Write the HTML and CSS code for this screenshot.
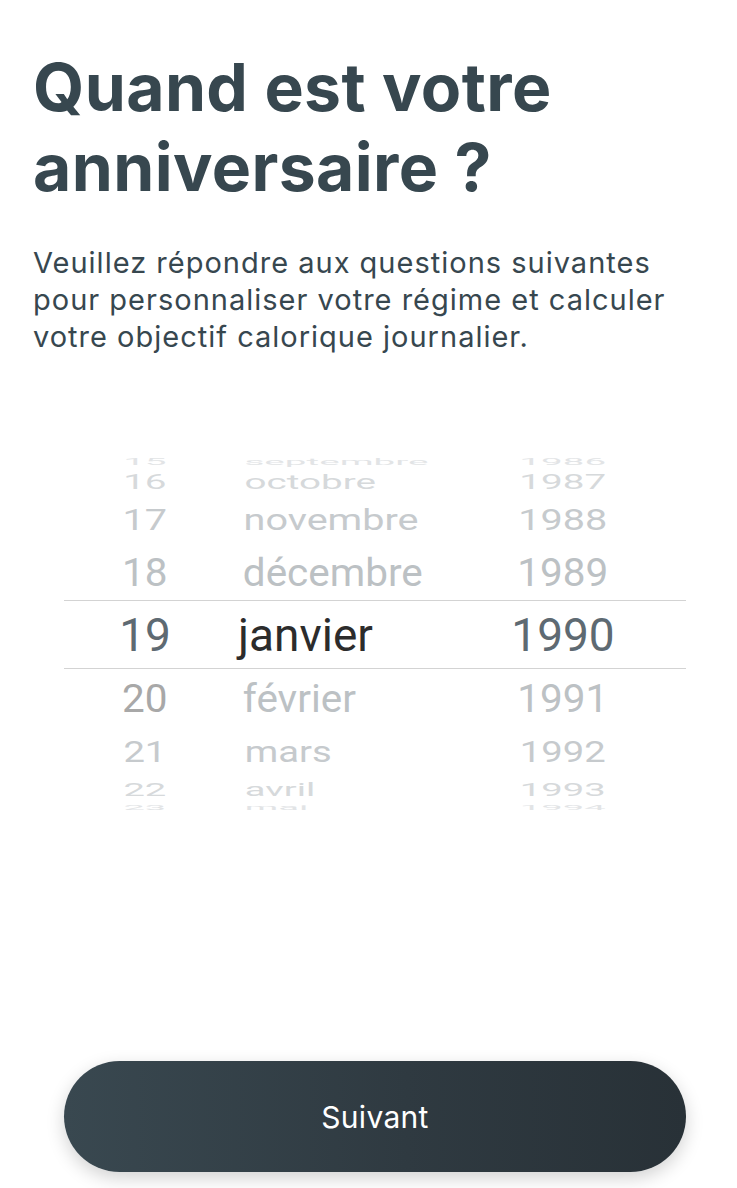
FILE: index.html
```html
<!DOCTYPE html>
<html lang="fr">
<head>
<meta charset="utf-8">
<title>Quand est votre anniversaire ?</title>
<link rel="stylesheet" href="styles.css">
</head>
<body>
<main class="screen">
  <header class="intro">
    <h1 class="title">Quand est votre anniversaire ?</h1>
    <p class="lead">Veuillez répondre aux questions suivantes pour personnaliser votre régime et calculer votre objectif calorique journalier.</p>
  </header>

  <section class="picker" aria-label="Date de naissance">
    <div class="row p-4"><span class="cell day"><span>15</span></span><span class="cell month"><span>septembre</span></span><span class="cell year"><span>1986</span></span></div>
    <div class="row p-3"><span class="cell day"><span>16</span></span><span class="cell month"><span>octobre</span></span><span class="cell year"><span>1987</span></span></div>
    <div class="row p-2"><span class="cell day"><span>17</span></span><span class="cell month"><span>novembre</span></span><span class="cell year"><span>1988</span></span></div>
    <div class="row p-1"><span class="cell day"><span>18</span></span><span class="cell month"><span>décembre</span></span><span class="cell year"><span>1989</span></span></div>
    <div class="row p0 selected"><span class="cell day"><span>19</span></span><span class="cell month"><span>janvier</span></span><span class="cell year"><span>1990</span></span></div>
    <div class="row p1"><span class="cell day alt"><span>20</span></span><span class="cell month"><span>février</span></span><span class="cell year"><span>1991</span></span></div>
    <div class="row p2"><span class="cell day"><span>21</span></span><span class="cell month"><span>mars</span></span><span class="cell year"><span>1992</span></span></div>
    <div class="row p3"><span class="cell day"><span>22</span></span><span class="cell month"><span>avril</span></span><span class="cell year"><span>1993</span></span></div>
    <div class="row p4"><span class="cell day"><span>23</span></span><span class="cell month"><span>mai</span></span><span class="cell year"><span>1994</span></span></div>
  </section>

  <div class="actions">
    <button class="next" type="button">Suivant</button>
  </div>
</main>
</body>
</html>
```

FILE: styles.css
```css
* { box-sizing: border-box; }

html, body {
  margin: 0;
  padding: 0;
  background: #ffffff;
}

.screen {
  min-height: 1188px;
  display: flex;
  flex-direction: column;
}

.intro {
  padding: 47px 33px 0 33px;
}

.title {
  margin: 0;
  font-family: Inter, "Noto Sans", sans-serif;
  font-weight: 700;
  font-size: 66px;
  line-height: 80px;
  color: #37474f;
  letter-spacing: 0.4px;
  max-width: 580px;
}

.lead {
  margin: 37px 0 0 0;
  max-width: 660px;
  font-family: Inter, "Noto Sans", sans-serif;
  font-weight: 400;
  font-size: 29px;
  line-height: 37px;
  letter-spacing: 1px;
  color: #37474f;
}

/* ---- wheel picker ---- */
.picker {
  margin: 98px 51px 0 64px;
  display: flex;
  flex-direction: column;
  font-family: Roboto, "Liberation Sans", sans-serif;
  font-size: 46px;
}

.row {
  display: flex;
  align-items: stretch;
  flex: 0 0 auto;
}

.cell {
  display: flex;
  align-items: center;
  min-height: 0;
}

.cell > span {
  display: inline-block;
  line-height: 1;
  white-space: nowrap;
}

.day { width: 162px; justify-content: center; }
.month { width: 214px; justify-content: flex-start; padding-left: 12px; }
.month > span { transform-origin: 40px 50%; }
.year { flex: 1; justify-content: center; }

.p-4 { height: 18px; color: #e2e4e6; }
.p-3 { height: 22px; color: #d6d9db; }
.p-2 { height: 52px; color: #c6cacd; }
.p-1 { height: 55px; color: #bcc1c4; }
.p0  { height: 69px; }
.p1  { height: 57px; color: #bcc1c4; }
.p2  { height: 52px; color: #c6cacd; }
.p3  { height: 23px; color: #d6d9db; }
.p4  { height: 14px; color: #e2e4e6; }

.p-4 .cell > span { transform: scale(0.84, 0.2); }
.p-3 .cell > span { transform: scale(0.84, 0.44); }
.p-2 .cell > span { transform: scale(0.86, 0.66); }
.p-1 .cell > span { transform: scale(0.88, 0.84); }
.p1 .cell > span  { transform: scale(0.88, 0.86); }
.p2 .cell > span  { transform: scale(0.83, 0.64); }
.p3 .cell > span  { transform: scale(0.83, 0.38); }
.p4 .cell > span  { transform: scale(0.83, 0.15); }

.selected {
  border-top: 1px solid #d3d3d3;
  border-bottom: 1px solid #d3d3d3;
}
.selected .day,
.selected .year { color: #5e6a72; }
.selected .month { color: #2c2c2c; }

.day.alt { color: #a8a8a8; }

/* ---- bottom action ---- */
.actions {
  margin-top: auto;
  padding: 0 51px 16px 64px;
}

.next {
  display: block;
  width: 100%;
  height: 111px;
  border: 0;
  border-radius: 56px;
  background: linear-gradient(90deg, #394850 0%, #2f3a41 55%, #283137 100%);
  box-shadow: 0 6px 18px rgba(0, 0, 0, 0.18);
  color: #ffffff;
  font-family: Inter, "Noto Sans", sans-serif;
  font-size: 30px;
  font-weight: 400;
  letter-spacing: 0.3px;
  cursor: pointer;
}
```
